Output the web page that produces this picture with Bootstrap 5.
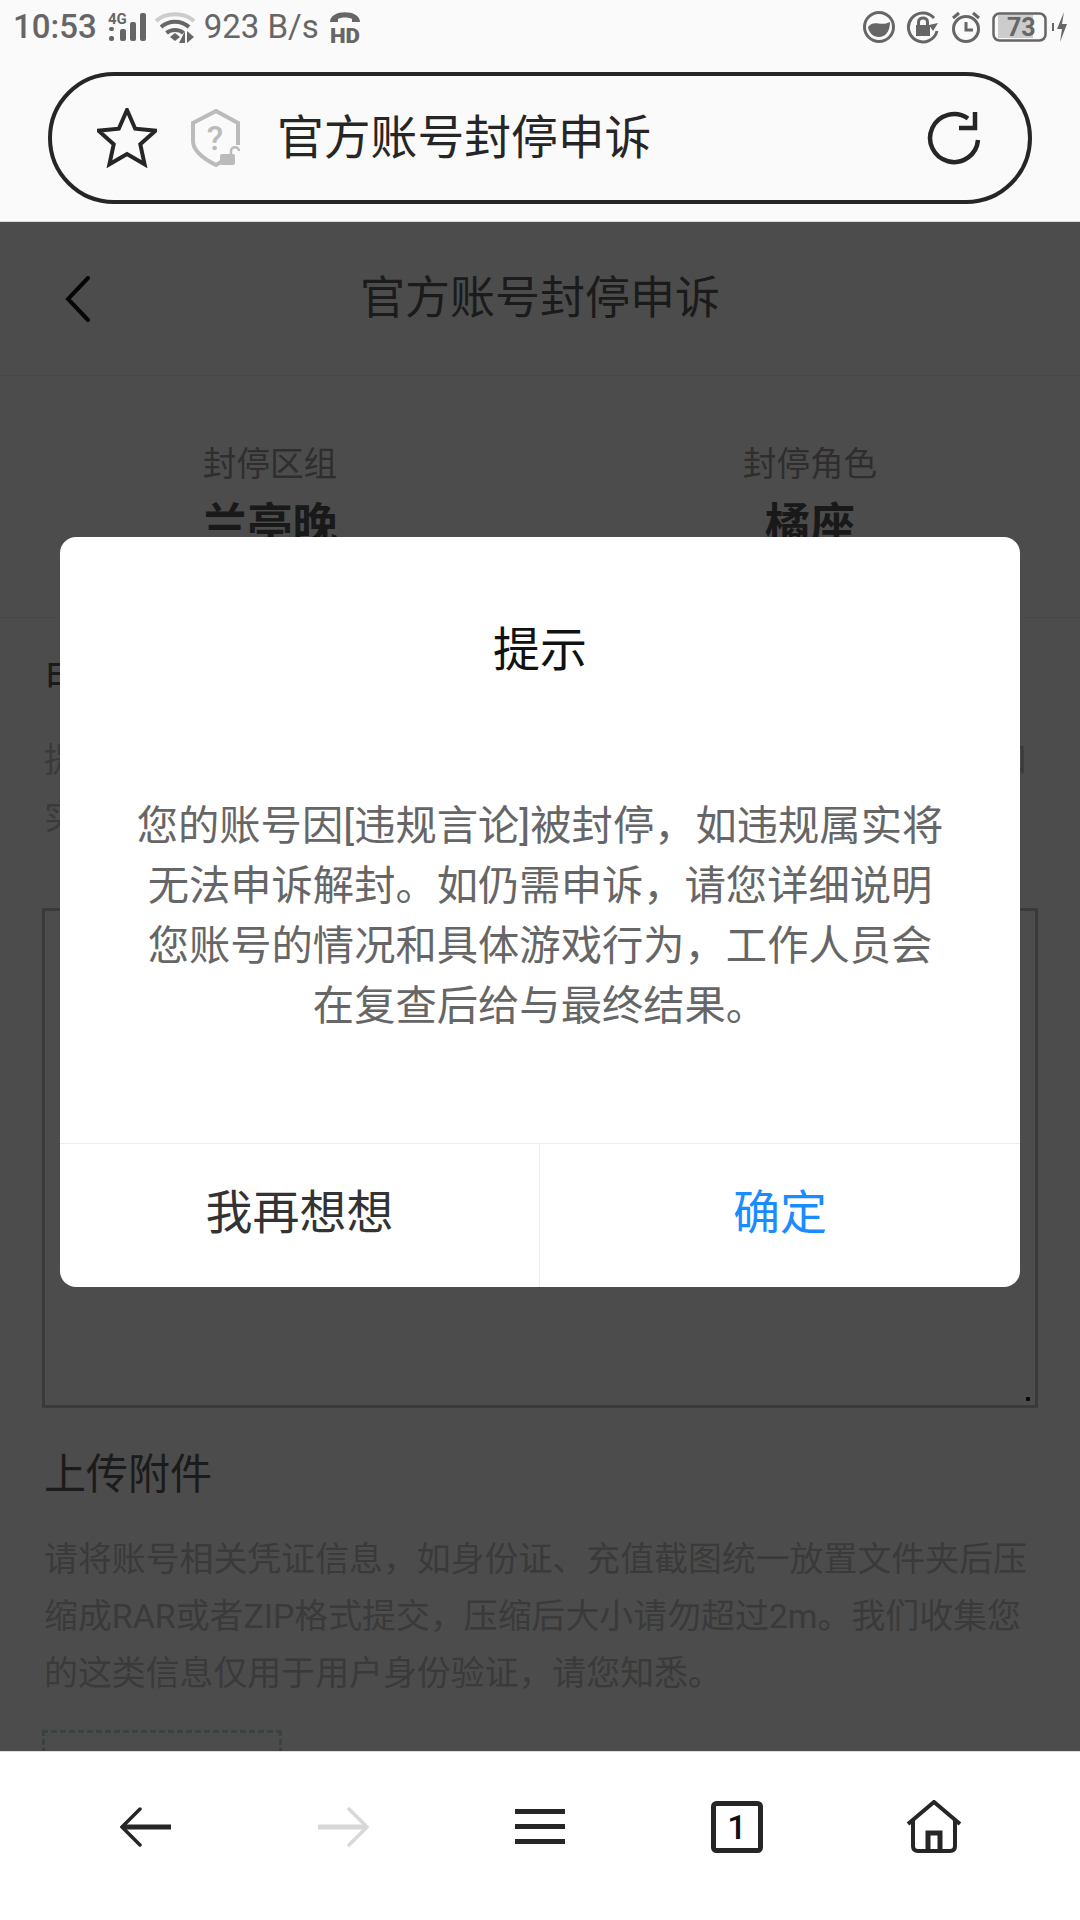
<!DOCTYPE html>
<html lang="zh-CN">
<head>
  <meta charset="UTF-8" />
  <meta name="viewport" content="width=device-width, initial-scale=1" />
  <title>官方账号封停申诉</title>
  <link href="https://cdn.jsdelivr.net/npm/bootstrap@5.3.3/dist/css/bootstrap.min.css" rel="stylesheet">
  <style>
    body { width: 1080px; height: 1920px; overflow: hidden; font-family: Roboto, "Noto Sans CJK SC", sans-serif; background: #fff; }
    svg { display: block; flex: none; }

    .status-strip { height: 52px; background: #fafafa; color: #666; padding: 2px 12px 0 13px; }
    .clock { font-size: 33px; font-weight: 500; line-height: 1.2; margin-right: 11px; }
    .speed { font-size: 33px; line-height: 1.2; margin: 0 10px 0 6px; }
    .status-gap { margin-left: 10px; }

    .address-wrap { height: 170px; background: #fafafa; padding: 20px 48px 0; border-bottom: 1px solid #ddd; }
    .address-pill { height: 132px; border: 4px solid #262626; border-radius: 66px; padding: 0 46px 0 45px; }
    .address-text { font-size: 46.8px; color: #262626; line-height: 1.2; margin-left: 35px; }
    .shield-icon { margin-left: 33px; }

    .web-page { min-height: 0; color: #5c5c5c; }
    .page-head { height: 154px; border-bottom: 1px solid #ececec; padding-left: 64px; }
    .page-title { font-size: 45px; line-height: 1.2; }
    .info-band { height: 242px; padding-top: 66px; border-bottom: 1px solid #f0f0f0; }
    .info-label { font-size: 33.6px; line-height: 46px; color: #999; }
    .info-value { font-size: 45px; line-height: 60px; font-weight: 700; color: #555; margin-top: 8px; }
    .form-part { padding: 0 42px; }
    .part-title { font-size: 42px; line-height: 58px; margin: 0 0 0 2px; font-weight: 400; color: #5c5c5c; }
    .part-note { font-size: 33.9px; line-height: 57px; color: #c2c2c2; margin: 0 0 0 2px; }
    .appeal-box.form-control { height: 500px; border: 3.5px solid #c2c2c2; border-radius: 0; margin-top: 62px; resize: none;
      background: radial-gradient(circle, #222 2px, transparent 2.5px) no-repeat right 4px bottom 2px / 6px 8px; }
    .upload-title.part-title { margin-top: 38px; }
    .upload-note.part-note { margin-top: 27px; }
    .upload-box { width: 240px; height: 120px; border: 3px dashed #c4dcd2; margin-top: 28px; }

    .dim-layer { background: rgba(0, 0, 0, .7); padding: 315px 60px 0; }
    .notice-box { height: 750px; background: #fff; border-radius: 16px; overflow: hidden; }
    .notice-title { font-size: 47px; line-height: 56px; padding-top: 85px; color: #111; margin: 0; font-weight: 400; }
    .notice-text { font-size: 41.3px; line-height: 60px; color: #666; padding: 0 72px; margin-top: 118px; }
    .notice-actions { height: 144px; border-top: 1px solid #eee; }
    .notice-btn.btn { font-size: 47px; line-height: 1.2; border: 0; border-radius: 0; padding: 0 0 4px; }
    .btn-later.btn { color: #333; border-right: 1px solid #eee; }
    .btn-sure.btn { color: #1a8cff; }

    .tool-strip { height: 169px; background: #fff; border-top: 1px solid #ddd; padding-bottom: 18px; }
    .tool-cell { width: 197px; }
  </style>
</head>
<body class="d-flex flex-column">

  <div class="status-strip d-flex align-items-center justify-content-between flex-shrink-0">
    <div class="d-flex align-items-center">
      <span class="clock">10:53</span>
      <svg width="38" height="30" viewBox="0 0 38 30" fill="#666">
        <text x="0" y="12" font-family="Roboto" font-weight="700" font-size="15">4G</text>
        <rect x="1" y="24" width="5" height="5" rx="2"/>
        <rect x="1" y="15" width="5" height="4" rx="2"/>
        <rect x="12" y="17" width="6" height="12" rx="2"/>
        <rect x="22" y="10" width="6" height="19" rx="2"/>
        <rect x="32" y="1" width="6" height="28" rx="2"/>
      </svg>
      <svg class="ms-2" width="44" height="32" viewBox="0 0 44 32" fill="none" stroke-width="4">
        <path d="M2 10 C12 1 30 1 40 10" stroke="#ccc"/>
        <path d="M7 16 C15 9 27 9 35 16" stroke="#666"/>
        <path d="M12.500 22 C17 18 25 18 29.500 22" stroke="#666"/>
        <path d="M16 26 L21 22 L26 26 L21 30 Z" fill="#666" stroke="none"/>
        <path d="M31 32 V20 L25 32 Z M33 20 V32 L40 26 Z" fill="#666" stroke="none"/>
      </svg>
      <span class="speed">923 B/s</span>
      <svg width="32" height="34" viewBox="0 0 32 34" fill="#666">
        <path d="M1 12 C1 -1 31 -1 31 12 L23 12 V9 C20 7 12 7 9 9 V12 Z"/>
        <text x="1" y="33" font-family="Roboto" font-weight="900" font-size="21" textLength="30" lengthAdjust="spacingAndGlyphs">HD</text>
      </svg>
    </div>
    <div class="d-flex align-items-center">
      <svg width="34" height="34" viewBox="0 0 34 34">
        <circle cx="17" cy="17" r="14.500" fill="none" stroke="#666" stroke-width="3"/>
        <path d="M6 17 C12 9 18 17 28 12 C28 22 23 27 17 27 C11 27 7 23 6 17 Z" fill="#666"/>
      </svg>
      <svg class="status-gap" width="34" height="34" viewBox="0 0 34 34" fill="none" stroke="#666" stroke-width="3">
        <path d="M31 21 A14.500 14.500 0 1 1 28 8"/>
        <path d="M32 13 L27 21 L23 15 Z" fill="#666" stroke="none"/>
        <rect x="10" y="15" width="14" height="11" fill="#666" stroke="none"/>
        <path d="M12.500 16 V12 C12.500 6.500 21.500 6.500 21.500 12 V16"/>
      </svg>
      <svg class="status-gap" width="32" height="34" viewBox="0 0 32 34" fill="none" stroke="#666" stroke-width="3">
        <circle cx="16" cy="19" r="12.500"/>
        <path d="M16 12 V20 H23"/>
        <path d="M3 8 L9 3 M29 8 L23 3"/>
      </svg>
      <div class="status-gap d-flex align-items-center">
        <svg class="me-1" width="56" height="30" viewBox="0 0 56 30">
          <rect x="6" y="3" width="35" height="23" fill="#ccc"/>
          <rect x="1.500" y="1.500" width="52" height="27" rx="6" fill="none" stroke="#666" stroke-width="2.500"/>
          <text x="15" y="24" font-family="Roboto" font-weight="700" font-size="25" fill="#666">73</text>
        </svg>
        <svg width="16" height="30" viewBox="0 0 16 30" fill="#666">
          <rect x="0" y="11" width="2" height="8"/>
          <path d="M12 0 L5 17 H10 L8 30 L15 12 H10 Z"/>
        </svg>
      </div>
    </div>
  </div>

  <div class="address-wrap flex-shrink-0">
    <div class="address-pill d-flex align-items-center">
      <svg width="60" height="60" viewBox="0 0 60 60" fill="none" stroke="#262626" stroke-width="4">
        <polygon points="30,2 38.200,20.700 58.500,22.700 43.300,36.300 47.600,56.300 30,46 12.400,56.300 16.700,36.300 1.500,22.700 21.800,20.700"/>
      </svg>
      <svg class="shield-icon" width="52" height="58" viewBox="0 0 52 58" fill="none" stroke="#bbb" stroke-width="4">
        <path d="M48 36 V14 L26 2 L3 14 V32 C3 42 14 50 26 56 L31 53"/>
        <text x="25" y="41" font-family="Roboto" font-weight="500" font-size="34" text-anchor="middle" fill="#bbb" stroke="none">?</text>
        <rect x="30" y="45" width="15" height="11" rx="2" fill="#bbb" stroke="none"/>
        <path d="M41 45 V42 C41 37 49 37 49 42" stroke-width="2.500"/>
      </svg>
      <span class="address-text">官方账号封停申诉</span>
      <svg class="ms-auto" width="56" height="56" viewBox="0 0 56 56" fill="none" stroke="#262626" stroke-width="4.500">
        <path d="M52 30 A24 24 0 1 1 42 8.500"/>
        <path d="M49 2 V18 H33"/>
      </svg>
    </div>
  </div>

  <div class="web-page flex-grow-1 position-relative overflow-hidden">
    <div class="page-head d-flex align-items-center position-relative">
      <svg width="28" height="46" viewBox="0 0 28 46" fill="none" stroke="#111" stroke-width="4" stroke-linecap="round">
        <path d="M24 2 L4 23 L24 44"/>
      </svg>
      <div class="page-title position-absolute top-50 start-50 translate-middle">官方账号封停申诉</div>
    </div>
    <div class="info-band row g-0 text-center">
      <div class="col-6">
        <div class="info-label">封停区组</div>
        <div class="info-value">兰亭晚</div>
      </div>
      <div class="col-6">
        <div class="info-label">封停角色</div>
        <div class="info-value">橘座</div>
      </div>
    </div>
    <div class="form-part pt-4">
      <h2 class="part-title mt-2">申诉说明</h2>
      <p class="part-note mt-4">提供账号被封停的详细情况说明，请您如实描述相关的游戏行为和实际情况。</p>
      <textarea class="appeal-box form-control"></textarea>
      <h2 class="part-title upload-title">上传附件</h2>
      <p class="part-note upload-note">请将账号相关凭证信息，如身份证、充值截图统一放置文件夹后压缩成RAR或者ZIP格式提交，压缩后大小请勿超过2m。我们收集您的这类信息仅用于用户身份验证，请您知悉。</p>
      <div class="upload-box"></div>
    </div>

    <div class="dim-layer position-absolute top-0 start-0 w-100 h-100">
      <div class="notice-box d-flex flex-column text-center">
        <h5 class="notice-title">提示</h5>
        <div class="notice-text flex-grow-1">您的账号因[违规言论]被封停，如违规属实将无法申诉解封。如仍需申诉，请您详细说明您账号的情况和具体游戏行为，工作人员会在复查后给与最终结果。</div>
        <div class="notice-actions d-flex">
          <button type="button" class="notice-btn btn-later btn w-50">我再想想</button>
          <button type="button" class="notice-btn btn-sure btn w-50">确定</button>
        </div>
      </div>
    </div>
  </div>

  <div class="tool-strip d-flex justify-content-center align-items-center flex-shrink-0">
    <div class="tool-cell d-flex justify-content-center">
      <svg width="52" height="40" viewBox="0 0 52 40" fill="none" stroke="#262626" stroke-width="3.500" stroke-linecap="round">
        <path d="M20 2 L2 20 L20 38"/>
        <path d="M3 20 H51" stroke-width="5" stroke-linecap="butt"/>
      </svg>
    </div>
    <div class="tool-cell d-flex justify-content-center">
      <svg width="52" height="40" viewBox="0 0 52 40" fill="none" stroke="#d8d8d8" stroke-width="3.500" stroke-linecap="round">
        <path d="M32 2 L50 20 L32 38"/>
        <path d="M1 20 H49" stroke-width="5" stroke-linecap="butt"/>
      </svg>
    </div>
    <div class="tool-cell d-flex justify-content-center">
      <svg width="50" height="36" viewBox="0 0 50 36" fill="#262626">
        <rect y="0" width="50" height="5"/>
        <rect y="15" width="50" height="5"/>
        <rect y="30" width="50" height="5"/>
      </svg>
    </div>
    <div class="tool-cell d-flex justify-content-center">
      <svg width="52" height="52" viewBox="0 0 52 52">
        <rect x="2.500" y="2.500" width="47" height="47" rx="3" fill="none" stroke="#262626" stroke-width="5"/>
        <text x="26" y="38" font-family="Roboto" font-weight="500" font-size="34" text-anchor="middle" fill="#111">1</text>
      </svg>
    </div>
    <div class="tool-cell d-flex justify-content-center">
      <svg width="56" height="54" viewBox="0 0 56 54" fill="none" stroke="#262626" stroke-width="4">
        <path d="M2 24 L28 2 L54 24"/>
        <path d="M7 20 V46 Q7 51 12 51 H44 Q49 51 49 46 V20"/>
        <path d="M22 51 V33 H34 V51" stroke-width="5"/>
      </svg>
    </div>
  </div>

</body>
</html>
